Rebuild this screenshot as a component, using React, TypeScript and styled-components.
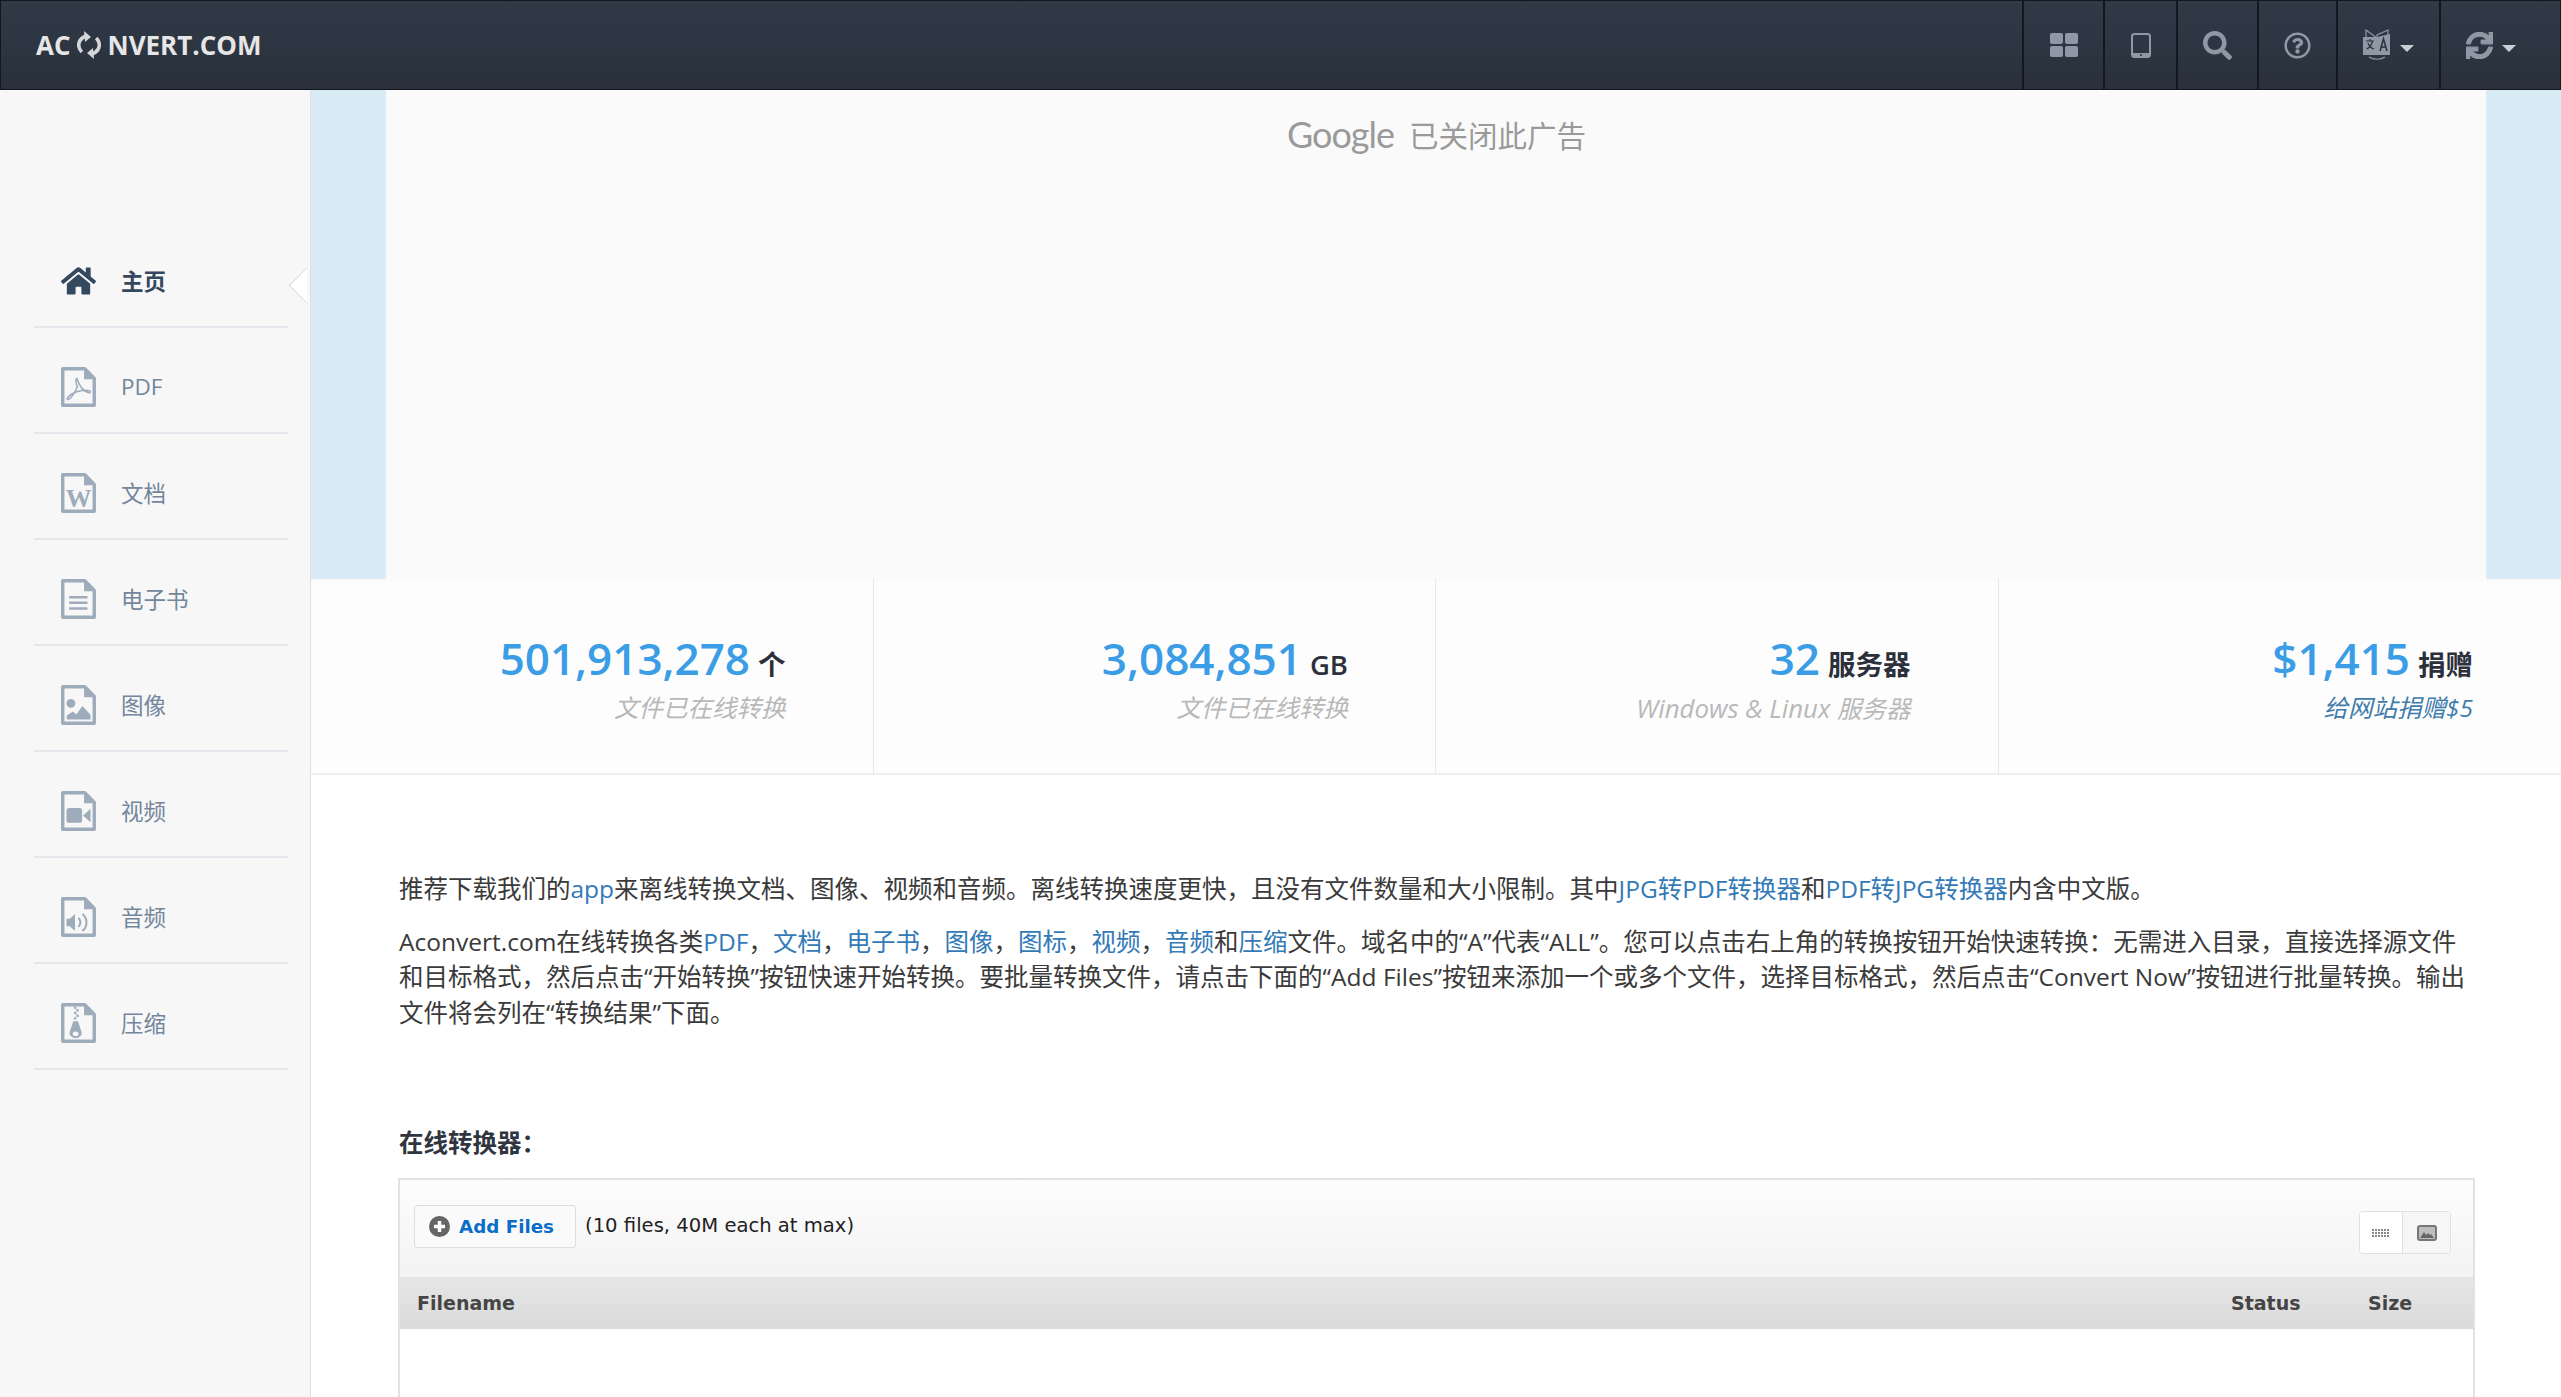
import styled, { createGlobalStyle } from 'styled-components';
import { FaHome, FaSearch, FaRegQuestionCircle, FaSync } from 'react-icons/fa';
import type { ReactNode } from 'react';

const GlobalStyle = createGlobalStyle`
  html, body {
    margin: 0;
    height: 100%;
    overflow: hidden;
    background: #fff;
    font-family: 'Open Sans', 'Noto Sans CJK SC', sans-serif;
  }
  * { box-sizing: border-box; }
`;

const Page = styled.div`
  width: 2561px;
  height: 1397px;
  display: flex;
  flex-direction: column;
  overflow: hidden;
`;

const Header = styled.header`
  height: 90px;
  flex: none;
  display: flex;
  align-items: stretch;
  justify-content: space-between;
  background: linear-gradient(#303b47, #29303c);
  border: 1px solid #14181d;
`;

const Logo = styled.div`
  display: flex;
  align-items: center;
  padding-left: 35px;
  color: #e6e6e6;
  font-size: 26px;
  font-weight: 700;
  svg { margin: 0 7px 0 6px; }
`;

const NavBar = styled.nav`
  display: flex;
  height: 100%;
`;

const NavButton = styled.div<{ $w: number; $pr?: number }>`
  width: ${(p) => p.$w}px;
  padding-right: ${(p) => p.$pr ?? 0}px;
  display: flex;
  align-items: center;
  justify-content: center;
  gap: 9px;
  color: #8f99a5;
  border-left: 2px solid #14181d;
`;

const Caret = styled.span`
  width: 0;
  height: 0;
  margin-top: 7px;
  border-left: 7px solid transparent;
  border-right: 7px solid transparent;
  border-top: 7px solid #c9ced4;
`;

const Body = styled.div`
  flex: 1;
  display: flex;
  min-height: 0;
`;

const Sidebar = styled.aside`
  width: 311px;
  flex: none;
  padding: 132px 22px 0 34px;
  background: #f7f7f7;
  border-right: 1px solid #d9e2ea;
`;

const MenuItem = styled.div<{ $active?: boolean }>`
  position: relative;
  height: 106px;
  padding: 13px 0 0 27px;
  display: flex;
  align-items: center;
  gap: 25px;
  border-bottom: 2px solid #e3e7ec;
  font-size: 22.5px;
  font-weight: ${(p) => (p.$active ? 700 : 400)};
  color: ${(p) => (p.$active ? '#34495e' : '#73869c')};
`;

const MenuIcon = styled.span<{ $active?: boolean }>`
  width: 35px;
  height: 40px;
  flex: none;
  display: flex;
  align-items: center;
  justify-content: center;
  color: ${(p) => (p.$active ? '#34495e' : '#9dabbb')};
  svg { display: block; }
`;

const ActiveArrow = styled.span`
  position: absolute;
  right: -33px;
  top: 50px;
  width: 27px;
  height: 27px;
  background: #fff;
  border-left: 1px solid #c9d3dc;
  border-bottom: 1px solid #c9d3dc;
  transform: rotate(45deg);
  clip-path: polygon(0 0, 100% 100%, 0 100%);
`;

const Main = styled.main`
  flex: 1;
  min-width: 0;
  display: flex;
  flex-direction: column;
`;

const AdBand = styled.div`
  height: 489px;
  flex: none;
  padding: 0 75px;
  background: #d9ebf5;
`;

const AdBox = styled.div`
  height: 100%;
  padding: 22px 0 0 1px;
  display: flex;
  justify-content: center;
  align-items: flex-start;
  gap: 15px;
  background: #fafafa;
  color: #9a9a9a;
  font-size: 29.5px;
  line-height: 44px;
`;

const GoogleMark = styled.span`
  font-family: 'Lato', sans-serif;
  font-size: 36px;
  letter-spacing: -1px;
`;

const AdNote = styled.span`
  margin-top: 2px;
`;

const StatsRow = styled.section`
  height: 196px;
  flex: none;
  display: grid;
  grid-template-columns: repeat(4, 1fr);
  background: linear-gradient(#fafafa, #fdfdfd 5px);
  border-bottom: 2px solid #eeeeee;
`;

const StatCell = styled.div`
  padding: 54px 87px 0 0;
  text-align: right;
  border-right: 1px solid #e8e8e8;
  &:last-child { border-right: 0; padding-right: 88px; }
`;

const StatValue = styled.div`
  line-height: 50px;
  white-space: nowrap;
`;

const StatNumber = styled.span`
  font-size: 44px;
  font-weight: 600;
  color: #3a9de5;
`;

const StatUnit = styled.span`
  margin-left: 8px;
  font-size: 27.5px;
  font-weight: 600;
  color: #2b303a;
`;

const StatNote = styled.div<{ $link?: boolean }>`
  font-size: 24.5px;
  line-height: 28px;
  font-style: italic;
  font-weight: 400;
  color: ${(p) => (p.$link ? '#3f7cac' : '#b8b8b8')};
`;

const NoteLatin = styled.span`
  font-size: 25.8px;
`;

const Content = styled.div`
  flex: 1;
  min-height: 0;
  padding: 96px 88px 0 88px;
  background: #fff;
  color: #3a3a3a;
  font-size: 24.5px;
  line-height: 35.6px;
`;

const Para = styled.p`
  margin: 0 0 17px;
  a { color: #337ab7; text-decoration: none; }
`;

const SectionTitle = styled.h3`
  margin: 95px 0 18px;
  font-size: 24.5px;
  line-height: 35px;
  font-weight: 700;
  color: #2f3640;
`;

const Panel = styled.div`
  height: 400px;
  margin: 0 -2px 0 -1px;
  border: 2px solid #e2e2e2;
  font-family: 'DejaVu Sans', sans-serif;
`;

const Toolbar = styled.div`
  height: 98px;
  padding: 25px 22px 0 14px;
  display: flex;
  align-items: flex-start;
  justify-content: space-between;
  background: linear-gradient(#fdfdfd, #f3f3f3);
  border-bottom: 1px solid #e6e6e6;
`;

const ToolLeft = styled.div`
  display: flex;
  align-items: center;
  gap: 9px;
`;

const LimitNote = styled.span`
  margin-top: -1px;
  font-size: 19.6px;
  line-height: 26px;
  color: #222;
`;

const AddButton = styled.div`
  width: 162px;
  height: 43px;
  padding-left: 14px;
  display: flex;
  align-items: center;
  gap: 9px;
  background: #fafafa;
  border: 1px solid #dedede;
  border-radius: 3px;
  color: #0b6dc9;
  font-size: 18.300px;
  font-weight: 700;
`;

const ViewToggle = styled.div`
  margin-top: 6px;
  display: flex;
  height: 43px;
  border: 1px solid #e0e0e0;
  border-radius: 4px;
  overflow: hidden;
`;

const ToggleCell = styled.div<{ $on?: boolean }>`
  width: ${(p) => (p.$on ? 42 : 48)}px;
  display: flex;
  align-items: center;
  justify-content: center;
  background: ${(p) => (p.$on ? '#fff' : '#f6f6f6')};
  & + & { border-left: 1px solid #e0e0e0; }
`;

const ColumnHead = styled.div`
  height: 51px;
  display: grid;
  grid-template-columns: 1fr 137px 105px;
  align-items: center;
  padding-left: 17px;
  background: linear-gradient(#e6e6e6, #dadada);
  color: #454545;
  font-size: 19px;
  font-weight: 700;
`;

type FileIconProps = { children?: ReactNode };

const FileIcon = ({ children }: FileIconProps) => (
  <svg width="35" height="40" viewBox="0 0 103 118">
    <path
      d="M5 5H70L98 34V113H5Z"
      fill="none"
      stroke="currentColor"
      strokeWidth="10"
      strokeLinejoin="round"
    />
    <path d="M68 5V36H98L68 5Z" fill="currentColor" />
    {children}
  </svg>
);

const menu: { label: string; glyph: ReactNode }[] = [
  {
    label: 'PDF',
    glyph: (
      <path
        d="M47 34c-5 0-3 14 1 24-7 18-19 36-27 38-6 1-2-9 12-17 17-9 39-13 50-9 7 3 3 7-3 5-13-3-26-18-33-41z"
        fill="none"
        stroke="currentColor"
        strokeWidth="4.5"
      />
    ),
  },
  {
    label: '文档',
    glyph: (
      <text x="52" y="101" textAnchor="middle" fontFamily="'Liberation Serif', serif" fontWeight="700" fontSize="76" fill="currentColor">
        W
      </text>
    ),
  },
  {
    label: '电子书',
    glyph: (
      <path d="M24 54H78M24 70H78M24 87H78" stroke="currentColor" strokeWidth="7" />
    ),
  },
  {
    label: '图像',
    glyph: (
      <g fill="currentColor">
        <circle cx="29" cy="54" r="13" />
        <path d="M17 102V90L35 78 45 87 63 62 87 88V102Z" />
      </g>
    ),
  },
  {
    label: '视频',
    glyph: (
      <g fill="currentColor">
        <rect x="16" y="50" width="46" height="44" rx="8" />
        <path d="M65 72L87 52V92Z" />
      </g>
    ),
  },
  {
    label: '音频',
    glyph: (
      <g>
        <path d="M16 64H26L41 50V100L26 86H16Z" fill="currentColor" />
        <path d="M51 62a17 17 0 0 1 0 26M63 50a32 32 0 0 1 0 50" fill="none" stroke="currentColor" strokeWidth="6" />
      </g>
    ),
  },
  {
    label: '压缩',
    glyph: (
      <g fill="currentColor">
        <path d="M38 10h7v7h-7zM45 18h7v7h-7zM38 26h7v7h-7zM45 34h7v7h-7zM38 42h7v7h-7z" />
        <path
          fillRule="evenodd"
          d="M36 54h14l10 30a18 15 0 1 1-34 0ZM43 84a9 7 0 1 0 .01 0Z"
        />
      </g>
    ),
  },
];

const stats: { num: string; unit: string; lead?: string; note: string; link?: boolean }[] = [
  { num: '501,913,278', unit: '个', note: '文件已在线转换' },
  { num: '3,084,851', unit: 'GB', note: '文件已在线转换' },
  { num: '32', unit: '服务器', lead: 'Windows & Linux ', note: '服务器' },
  { num: '$1,415', unit: '捐赠', note: '给网站捐赠$5', link: true },
];

const LogoIcon = () => (
  <svg width="24" height="28" viewBox="0 0 24 28" fill="none">
    <path d="M9 5C3 7 1 12 2 16c.4 2 1.4 3.6 2.8 5" stroke="#d4d6d8" strokeWidth="3.6" />
    <path d="M7 0l7 6-6 5z" fill="#d4d6d8" />
    <path d="M15 23c6-2 8-7 7-11-.4-2-1.4-3.6-2.8-5" stroke="#d4d6d8" strokeWidth="3.6" />
    <path d="M17 28l-7-6 6-5z" fill="#d4d6d8" />
  </svg>
);

// open book with a kana page on the left and an A page on the right
const TranslateIcon = () => (
  <svg width="28" height="32" viewBox="0 0 28 32">
    <path d="M3 1l11 8v3H3z" fill="none" stroke="#8f99a5" strokeWidth="1.200" />
    <path d="M25 1l-11 5v4h11z" fill="none" stroke="#8f99a5" strokeWidth="1.200" />
    <path d="M0 8h14v18H0z" fill="#8f99a5" />
    <path d="M14 8l13-3v21l-13 0z" fill="#8f99a5" />
    <path d="M3 12h8M7 10v2M9.500 12c-1 4-3 7-6 8M5 14c1 3 3 5 6 6" fill="none" stroke="#29303c" strokeWidth="1.200" />
    <path d="M17 22l3.500-12 3.500 12M18.500 18h4" fill="none" stroke="#29303c" strokeWidth="1.500" />
    <path d="M6 28c4 3 12 3 16 0" fill="none" stroke="#8f99a5" strokeWidth="1.200" />
  </svg>
);

const App = () => (
  <Page>
    <GlobalStyle />
    <Header>
      <Logo>
        AC
        <LogoIcon />
        NVERT.COM
      </Logo>
      <NavBar>
        <NavButton $w={81}>
          <svg width="28" height="24" viewBox="0 0 28 24" fill="currentColor">
            <rect width="13" height="11" rx="2" />
            <rect x="15" width="13" height="11" rx="2" />
            <rect y="13" width="13" height="11" rx="2" />
            <rect x="15" y="13" width="13" height="11" rx="2" />
          </svg>
        </NavButton>
        <NavButton $w={73}>
          <svg width="20" height="25" viewBox="0 0 20 25">
            <rect x="1" y="1" width="18" height="23" rx="2.500" fill="none" stroke="currentColor" strokeWidth="2" />
            <rect x="1" y="20" width="18" height="4" fill="currentColor" />
            <circle cx="10" cy="22" r="1" fill="#29303c" />
          </svg>
        </NavButton>
        <NavButton $w={81}>
          <FaSearch size={29} />
        </NavButton>
        <NavButton $w={79}>
          <FaRegQuestionCircle size={27} />
        </NavButton>
        <NavButton $w={103}>
          <TranslateIcon />
          <Caret />
        </NavButton>
        <NavButton $w={121} $pr={20}>
          <FaSync size={27} stroke="currentColor" strokeWidth={24} />
          <Caret />
        </NavButton>
      </NavBar>
    </Header>
    <Body>
      <Sidebar>
        <MenuItem $active>
          <MenuIcon $active>
            <FaHome size={36} />
          </MenuIcon>
          主页
          <ActiveArrow />
        </MenuItem>
        {menu.map((m) => (
          <MenuItem key={m.label}>
            <MenuIcon>
              <FileIcon>{m.glyph}</FileIcon>
            </MenuIcon>
            {m.label}
          </MenuItem>
        ))}
      </Sidebar>
      <Main>
        <AdBand>
          <AdBox>
            <GoogleMark>Google</GoogleMark>
            <AdNote>已关闭此广告</AdNote>
          </AdBox>
        </AdBand>
        <StatsRow>
          {stats.map((s) => (
            <StatCell key={s.num}>
              <StatValue>
                <StatNumber>{s.num}</StatNumber>
                <StatUnit>{s.unit}</StatUnit>
              </StatValue>
              <StatNote $link={s.link}>
                {s.lead && <NoteLatin>{s.lead}</NoteLatin>}
                {s.note}
              </StatNote>
            </StatCell>
          ))}
        </StatsRow>
        <Content>
          <Para>
            推荐下载我们的<a href="#">app</a>来离线转换文档、图像、视频和音频。离线转换速度更快，且没有文件数量和大小限制。其中<a href="#">JPG转PDF转换器</a>和<a href="#">PDF转JPG转换器</a>内含中文版。
          </Para>
          <Para>
            Aconvert.com在线转换各类<a href="#">PDF</a>，<a href="#">文档</a>，<a href="#">电子书</a>，<a href="#">图像</a>，<a href="#">图标</a>，<a href="#">视频</a>，<a href="#">音频</a>和<a href="#">压缩</a>文件。域名中的“A”代表“ALL”。您可以点击右上角的转换按钮开始快速转换：无需进入目录，直接选择源文件和目标格式，然后点击“开始转换”按钮快速开始转换。要批量转换文件，请点击下面的“Add Files”按钮来添加一个或多个文件，选择目标格式，然后点击“Convert Now”按钮进行批量转换。输出文件将会列在“转换结果”下面。
          </Para>
          <SectionTitle>在线转换器：</SectionTitle>
          <Panel>
            <Toolbar>
              <ToolLeft>
                <AddButton>
                  <svg width="21" height="21" viewBox="0 0 21 21">
                    <circle cx="10.500" cy="10.500" r="10.500" fill="#666" />
                    <path d="M10.500 5v11M5 10.500h11" stroke="#fff" strokeWidth="3.500" />
                  </svg>
                  Add Files
                </AddButton>
                <LimitNote>(10 files, 40M each at max)</LimitNote>
              </ToolLeft>
              <ViewToggle>
                <ToggleCell $on>
                  <svg width="18" height="8" viewBox="0 0 18 8" fill="#888">
                    {[0, 3, 6].map((y) =>
                      [0, 3, 6, 9, 12, 15].map((x) => <rect key={`${x}-${y}`} x={x} y={y} width="2" height="2" />),
                    )}
                  </svg>
                </ToggleCell>
                <ToggleCell>
                  <svg width="20" height="16" viewBox="0 0 20 16">
                    <rect x="1" y="1" width="18" height="14" rx="2" fill="#bdbdbd" stroke="#777" strokeWidth="2" />
                    <path d="M3 13L7 7l2 3 2-2 2 2 1-1 3 4z" fill="#666" />
                  </svg>
                </ToggleCell>
              </ViewToggle>
            </Toolbar>
            <ColumnHead>
              <span>Filename</span>
              <span>Status</span>
              <span>Size</span>
            </ColumnHead>
          </Panel>
        </Content>
      </Main>
    </Body>
  </Page>
);

export default App;
